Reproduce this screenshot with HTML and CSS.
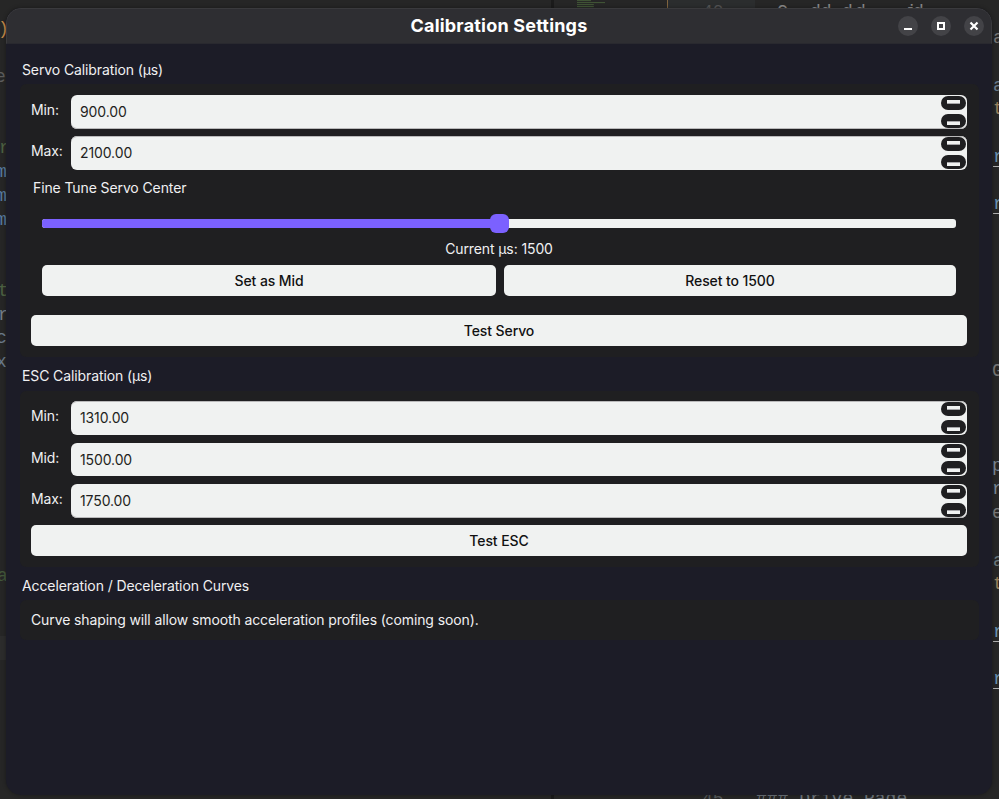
FILE: index.html
```html
<!DOCTYPE html>
<html lang="en">
<head>
<meta charset="utf-8">
<title>Calibration Settings</title>
<link rel="stylesheet" href="styles.css">
</head>
<body>
<div class="backdrop" id="backdrop" aria-hidden="true">
  <div class="strip strip-left"></div>
  <div class="strip strip-gutter"></div>
  <div class="minimap"></div>
  <div class="divider"></div>
</div>
<main class="window">
  <header class="titlebar">
    <h1>Calibration Settings</h1>
    <div class="controls">
      <span class="control"><svg viewBox="0 0 20 20"><path d="M6 13h8" stroke-width="2"/></svg></span>
      <span class="control"><svg viewBox="0 0 20 20"><path d="M7 7h6v6H7z" stroke-width="2"/></svg></span>
      <span class="control"><svg viewBox="0 0 20 20"><path d="M6.500 6.500l7 7M13.500 6.500l-7 7" stroke-width="2.200"/></svg></span>
    </div>
  </header>
  <div class="content">
    <h2>Servo Calibration (µs)</h2>
    <section class="panel servo">
      <div class="row"><label>Min:</label><div class="spin end-soft"><span>900.00</span><div class="steps"><i class="up"></i><i class="down"></i></div></div></div>
      <div class="row"><label>Max:</label><div class="spin start-soft"><span>2100.00</span><div class="steps"><i class="up"></i><i class="down"></i></div></div></div>
      <div class="tune">
        <h3>Fine Tune Servo Center</h3>
        <div class="slider"><div class="track"><div class="fill"></div></div><div class="thumb"></div></div>
        <p>Current µs: 1500</p>
        <div class="pair"><button>Set as Mid</button><button>Reset to 1500</button></div>
      </div>
      <button>Test Servo</button>
    </section>
    <h2>ESC Calibration (µs)</h2>
    <section class="panel esc">
      <div class="row"><label>Min:</label><div class="spin start-soft"><span>1310.00</span><div class="steps"><i class="up"></i><i class="down"></i></div></div></div>
      <div class="row short"><label>Mid:</label><div class="spin"><span>1500.00</span><div class="steps"><i class="up"></i><i class="down"></i></div></div></div>
      <div class="row"><label>Max:</label><div class="spin end-soft"><span>1750.00</span><div class="steps"><i class="up"></i><i class="down"></i></div></div></div>
      <button>Test ESC</button>
    </section>
    <h2>Acceleration / Deceleration Curves</h2>
    <section class="panel curves"><p>Curve shaping will allow smooth acceleration profiles (coming soon).</p></section>
  </div>
</main>
<script src="backdrop.js"></script>
</body>
</html>
```
FILE: backdrop.js
```js
// Code fragments of the editor behind the window: text, x, vertical centre, colour, underlined.
const fragments = [
  [")", -2, 29, "#c48a48"], ["e", -5, 77, "#5d5d5d"], ["r", -1, 148, "#4d6142"],
  ["m", -4, 172, "#587ba0"], ["m", -4, 196, "#587ba0"], ["m", -4, 220, "#587ba0"],
  ["t", -2, 291, "#4d6142"], ["r", -2, 315, "#747d88"], ["c", -4, 338, "#6b7a8a"], ["x", -4, 362, "#6b7a8a"],
  ["a", -3, 576, "#43583b"],
  ["a", 993, 38, "#777777"], ["a", 993, 86, "#6b7d90"], ["t", 993, 109, "#99815f"],
  ["r", 993, 157, "#6b92b0", true], ["r", 993, 204, "#6b92b0", true],
  ["G", 992, 371, "#777777"], ["p", 992, 466, "#7a8794"], ["r", 992, 489, "#7a8794"],
  ["e", 992, 513, "#7a7a7a"], ["a", 993, 561, "#6b7a80"], ["t", 993, 584, "#99815f"],
  ["r", 993, 632, "#6b92b0", true], ["r", 993, 679, "#6b92b0", true],
  ["40", 702, 12, "#555555"], ["C", 777, 12, "#8a8a8a"], ["dd", 810, 12, "#8a8a8a"],
  ["d", 842, 12, "#8a8a8a"], ["d", 855, 12, "#8a8a8a"], ["i", 906, 12, "#8a8a8a"], ["d", 913, 12, "#8a8a8a"],
  ["45", 702, 799, "#55595c"], ["### Drive Page", 756, 799, "#70777e"]
];
const backdrop = document.getElementById("backdrop");
for (const [text, x, y, color, underlined] of fragments) {
  const el = document.createElement("span");
  el.className = underlined ? "fragment underlined" : "fragment";
  el.textContent = text;
  el.style.cssText = `left:${x}px;top:${y - 12}px;color:${color}`;
  backdrop.append(el);
}
```
FILE: styles.css
```css
* { box-sizing: border-box; }
body {
  margin: 0;
  width: 999px;
  height: 799px;
  overflow: hidden;
  position: relative;
  background: #262626;
  font: 14px/20px Inter, "Liberation Sans", sans-serif;
  letter-spacing: -.11px;
  color: #f0f0f2;
}
h1, h2, h3, p { margin: 0; font: inherit; }

.backdrop { position: absolute; inset: 0; overflow: hidden; }
.strip { position: absolute; }
.strip-left { left: 0; top: 636px; width: 6px; height: 24px; background: #2c2c2c; }
.strip-gutter { left: 667px; top: 0; width: 88px; height: 8px; background: #2b2d2e; border-left: 1px solid #80643f; }
.minimap {
  position: absolute; left: 577px; top: 0; width: 28px; height: 8px; opacity: .6;
  background: repeating-linear-gradient(#50713f 0 1px, #2a2e28 1px 2px);
  clip-path: polygon(0 0, 50% 0, 50% 25%, 100% 25%, 100% 50%, 60% 50%, 60% 100%, 0 100%);
}
.divider { position: absolute; left: 551px; top: 0; width: 3px; height: 799px; background: #1b1b1b; }
.fragment {
  position: absolute;
  height: 24px;
  font: 18px/24px "Liberation Mono", monospace;
  letter-spacing: 0;
  white-space: pre;
}
.underlined { border-bottom: 1px solid #b0b0b0; height: 22px; }

.window {
  position: relative;
  width: 986px;
  height: 787px;
  margin: 0 0 0 6px;
  top: 8px;
  border-radius: 15px;
  overflow: hidden;
  background: #1c1c27;
  box-shadow: 0 0 4px #0005;
}
.titlebar {
  height: 36px;
  display: grid;
  grid-template-columns: 1fr auto 1fr;
  align-items: center;
  padding: 0 7px;
  background: #2e2e32;
  border: 1px solid #3a3a3d;
  border-bottom: 1px solid #29292f;
  border-radius: 15px 15px 0 0;
}
.titlebar h1 { grid-column: 2; font-weight: 700; font-size: 18px; letter-spacing: .2px; line-height: 34px; color: #fff; }
.controls { display: flex; gap: 13px; justify-self: end; }
.control { width: 20px; height: 20px; border-radius: 50%; background: #434347; }
.control svg { display: block; fill: none; stroke: #fff; }

.content { padding: 16px 13px 0 14px; }
.content h2 { padding-left: 2px; height: 24px; }
.panel {
  display: flex;
  flex-direction: column;
  padding: 11px 12px 0 11px;
  border-radius: 6px;
  background: #1f1f21;
}
.servo { height: 273px; margin-bottom: 9px; }
.servo + h2 { height: 25px; }
.esc { height: 176px; padding-top: 10px; margin-bottom: 9px; }
.curves { height: 40px; padding-top: 10px; }

.row { display: flex; height: 34px; flex: none; }
.servo .row + .row { margin-top: 7px; }
.esc .row + .row { margin-top: 8px; }
.row.short { height: 33px; }
.row label { width: 40px; line-height: 30px; }
.spin {
  flex: 1;
  display: flex;
  justify-content: space-between;
  padding-left: 9px;
  border-radius: 6px;
  background: #f0f2f1;
  color: #1f1f21;
  line-height: 34px;
}
.end-soft { box-shadow: inset 0 -1px #b9b9ba; }
.start-soft { box-shadow: inset 0 1px #b9b9ba; }
.steps { display: flex; flex-direction: column; justify-content: space-between; padding: 1px 1px 1px 0; }
.steps i { width: 25px; height: 14px; border-radius: 7px; background: #1f1f21; display: flex; justify-content: center; }
.steps i::before { content: ""; width: 13px; height: 3px; margin-top: 4px; background: #f0f2f1; border-bottom: 1px solid #a5a5a8; }
.steps .down::before { margin-top: 7px; border-bottom: 0; border-top: 1px solid #a5a5a8; }

.tune { padding: 8px 11px 0; height: 145px; }
.tune h3 { margin-left: -9px; }
.slider { height: 31px; margin-top: 10px; position: relative; }
.track { height: 9px; position: relative; top: 11px; border-radius: 3px; background: #f0f2f1; overflow: hidden; }
.fill { width: 50%; height: 100%; background: #7b61ff; }
.thumb { position: absolute; left: 448px; top: 6px; width: 19px; height: 19px; border-radius: 6px; background: #7b61ff; }
.tune p { text-align: center; }
.pair { display: grid; grid-template-columns: 454px 1fr; gap: 8px; margin-top: 6px; }
button {
  height: 31px;
  flex: none;
  border: 0;
  padding: 0;
  border-radius: 5px;
  background: #f0f2f1;
  color: #111;
  font: 500 14px/31px Inter, "Liberation Sans", sans-serif;
  letter-spacing: -.1px;
}
.esc button { margin-top: 7px; }
```
